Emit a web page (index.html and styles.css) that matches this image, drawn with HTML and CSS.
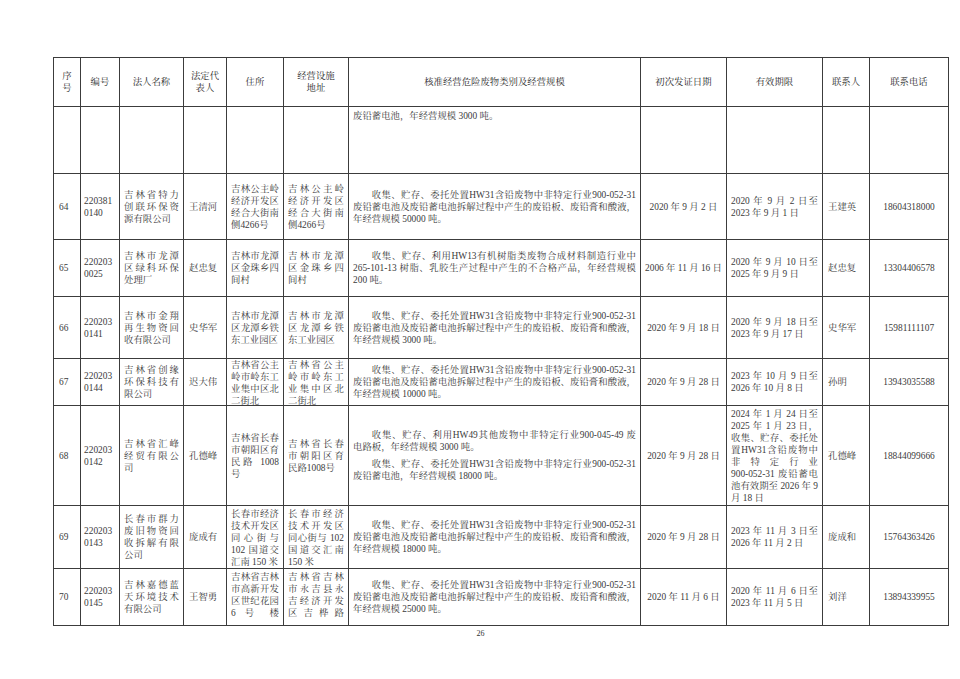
FILE: index.html
```html
<!DOCTYPE html>
<html lang="zh-CN">
<head>
<meta charset="utf-8">
<title>危险废物经营许可证名录</title>
<link rel="stylesheet" href="styles.css">
</head>
<body>
<div class="page">
  <table class="tbl">
    <colgroup>
      <col class="w-no"><col class="w-code"><col class="w-name"><col class="w-rep"><col class="w-addr"><col class="w-fac"><col class="w-scope"><col class="w-date"><col class="w-valid"><col class="w-person"><col class="w-phone">
    </colgroup>
    <thead>
      <tr class="r-head">
        <th>序<br>号</th>
        <th class="soft">编号</th>
        <th class="soft">法人名称</th>
        <th>法定代<br>表人</th>
        <th>住所</th>
        <th>经营设施<br>地址</th>
        <th>核准经营危险废物类别及经营规模</th>
        <th class="soft">初次发证日期</th>
        <th>有效期限</th>
        <th>联系人</th>
        <th>联系电话</th>
      </tr>
    </thead>
    <tbody>
      <tr class="r-cont">
        <td></td><td class="soft"></td><td class="soft"></td><td></td><td></td><td></td>
        <td class="scope top"><span class="ln">废铅蓄电池，年经营规模 3000 吨。</span></td>
        <td class="soft"></td><td></td><td></td><td></td>
      </tr>
      <tr class="r64">
        <td class="no">64</td>
        <td class="code soft">220381<br>0140</td>
        <td class="jt soft">吉林省特力创联环保资源有限公司</td>
        <td class="rep">王清河</td>
        <td class="jt">吉林公主岭经济开发区经合大街南侧4266号</td>
        <td class="jt">吉林公主岭经济开发区经合大街南侧4266号</td>
        <td class="scope"><span class="ln j ind">收集、贮存、委托处置HW31含铅废物中非特定行业900-052-31</span><span class="ln j">废铅蓄电池及废铅蓄电池拆解过程中产生的废铅板、废铅膏和酸液，</span><span class="ln">年经营规模 50000 吨。</span></td>
        <td class="date soft">2020 年 9 月 2 日</td>
        <td class="valid"><span class="ln j">2020 年 9 月 2 日至</span><span class="ln">2023 年 9 月 1 日</span></td>
        <td class="person">王建英</td>
        <td class="phone">18604318000</td>
      </tr>
      <tr class="r65">
        <td class="no">65</td>
        <td class="code soft">220203<br>0025</td>
        <td class="jt soft">吉林市龙潭区绿科环保处理厂</td>
        <td class="rep">赵忠复</td>
        <td class="jt">吉林市龙潭区金珠乡四间村</td>
        <td class="jt">吉林市龙潭区金珠乡四间村</td>
        <td class="scope"><span class="ln j ind">收集、贮存、利用HW13有机树脂类废物合成材料制造行业中</span><span class="ln j">265-101-13 树脂、乳胶生产过程中产生的不合格产品，年经营规模</span><span class="ln">200 吨。</span></td>
        <td class="date soft">2006 年 11 月 16 日</td>
        <td class="valid"><span class="ln j">2020 年 9 月 10 日至</span><span class="ln">2025 年 9 月 9 日</span></td>
        <td class="person">赵忠复</td>
        <td class="phone">13304406578</td>
      </tr>
      <tr class="r66">
        <td class="no">66</td>
        <td class="code soft">220203<br>0141</td>
        <td class="jt soft">吉林市金翔再生物资回收有限公司</td>
        <td class="rep">史华军</td>
        <td class="jt">吉林市龙潭区龙潭乡铁东工业园区</td>
        <td class="jt">吉林市龙潭区龙潭乡铁东工业园区</td>
        <td class="scope"><span class="ln j ind">收集、贮存、委托处置HW31含铅废物中非特定行业900-052-31</span><span class="ln j">废铅蓄电池及废铅蓄电池拆解过程中产生的废铅板、废铅膏和酸液，</span><span class="ln">年经营规模 3000 吨。</span></td>
        <td class="date soft">2020 年 9 月 18 日</td>
        <td class="valid"><span class="ln j">2020 年 9 月 18 日至</span><span class="ln">2023 年 9 月 17 日</span></td>
        <td class="person">史华军</td>
        <td class="phone">15981111107</td>
      </tr>
      <tr class="r67">
        <td class="no">67</td>
        <td class="code soft">220203<br>0144</td>
        <td class="jt soft">吉林省创缘环保科技有限公司</td>
        <td class="rep">迟大伟</td>
        <td class="jt"><div class="clip c67">吉林省公主岭市岭东工业集中区北二街北</div></td>
        <td class="jt"><div class="clip c67">吉林省公主岭市岭东工业集中区北二街北</div></td>
        <td class="scope"><span class="ln j ind">收集、贮存、委托处置HW31含铅废物中非特定行业900-052-31</span><span class="ln j">废铅蓄电池及废铅蓄电池拆解过程中产生的废铅板、废铅膏和酸液，</span><span class="ln">年经营规模 10000 吨。</span></td>
        <td class="date soft">2020 年 9 月 28 日</td>
        <td class="valid"><span class="ln j">2023 年 10 月 9 日至</span><span class="ln">2026 年 10 月 8 日</span></td>
        <td class="person">孙明</td>
        <td class="phone">13943035588</td>
      </tr>
      <tr class="r68">
        <td class="no">68</td>
        <td class="code soft">220203<br>0142</td>
        <td class="jt soft">吉林省汇峰经贸有限公司</td>
        <td class="rep">孔德峰</td>
        <td class="jt">吉林省长春市朝阳区育民路 1008 号</td>
        <td class="jt">吉林省长春市朝阳区育民路1008号</td>
        <td class="scope"><span class="ln j ind">收集、贮存、利用HW49其他废物中非特定行业900-045-49 废</span><span class="ln">电路板，年经营规模 3000 吨。</span><span class="ln j ind para">收集、贮存、委托处置HW31含铅废物中非特定行业900-052-31</span><span class="ln">废铅蓄电池，年经营规模 18000 吨。</span></td>
        <td class="date soft">2020 年 9 月 28 日</td>
        <td class="valid"><span class="ln j">2024 年 1 月 24 日至</span><span class="ln j">2025 年 1 月 23 日，</span><span class="ln j">收集、贮存、委托处</span><span class="ln j">置HW31含铅废物中</span><span class="ln j">非特定行业</span><span class="ln j">900-052-31 废铅蓄电</span><span class="ln j">池有效期至 2026 年 9</span><span class="ln">月 18 日</span></td>
        <td class="person">孔德峰</td>
        <td class="phone">18844099666</td>
      </tr>
      <tr class="r69">
        <td class="no">69</td>
        <td class="code soft">220203<br>0143</td>
        <td class="jt soft">长春市群力废旧物资回收拆解有限公司</td>
        <td class="rep">庞成有</td>
        <td class="jt top">长春市经济技术开发区同心街与 102 国道交汇南 150 米</td>
        <td class="jt top">长春市经济技术开发区同心街与 102 国道交汇南 150 米</td>
        <td class="scope"><span class="ln j ind">收集、贮存、委托处置HW31含铅废物中非特定行业900-052-31</span><span class="ln j">废铅蓄电池及废铅蓄电池拆解过程中产生的废铅板、废铅膏和酸液，</span><span class="ln">年经营规模 18000 吨。</span></td>
        <td class="date soft">2020 年 9 月 28 日</td>
        <td class="valid"><span class="ln j">2023 年 11 月 3 日至</span><span class="ln">2026 年 11 月 2 日</span></td>
        <td class="person">庞成和</td>
        <td class="phone">15764363426</td>
      </tr>
      <tr class="r70">
        <td class="no">70</td>
        <td class="code soft">220203<br>0145</td>
        <td class="jt soft">吉林嘉德蓝天环境技术有限公司</td>
        <td class="rep">王智勇</td>
        <td class="jt top"><div class="clip c70 jl">吉林省吉林市高新开发区世纪花园 6 号 楼</div></td>
        <td class="jt top"><div class="clip c70 jl">吉林省吉林市永吉县永吉经济开发区吉桦路</div></td>
        <td class="scope"><span class="ln j ind">收集、贮存、委托处置HW31含铅废物中非特定行业900-052-31</span><span class="ln j">废铅蓄电池及废铅蓄电池拆解过程中产生的废铅板、废铅膏和酸液，</span><span class="ln">年经营规模 25000 吨。</span></td>
        <td class="date soft">2020 年 11 月 6 日</td>
        <td class="valid"><span class="ln j">2020 年 11 月 6 日至</span><span class="ln">2023 年 11 月 5 日</span></td>
        <td class="person">刘洋</td>
        <td class="phone">13894339955</td>
      </tr>
    </tbody>
  </table>
  <div class="pageno">26</div>
</div>
</body>
</html>
```
FILE: styles.css
```css
* { box-sizing: border-box; }
html, body { margin: 0; padding: 0; background: #fff; }
body {
  font-family: "Liberation Serif", "Noto Serif CJK SC", "Noto Sans CJK SC", serif;
  color: #3a3a3a;
}
.page {
  width: 960px;
  height: 679px;
  padding: 57px 0 0 53px;
  overflow: hidden;
}
.tbl {
  border-collapse: collapse;
  table-layout: fixed;
  width: 895px;
  font-size: 9.4px;
  line-height: 12px;
}
.tbl th, .tbl td {
  border: 1px solid #3c3c3c;
  padding: 0 4px;
  vertical-align: middle;
  overflow: hidden;
}
.tbl th.soft, .tbl td.soft { border-left-color: #8c8c8c; }
.tbl th {
  font-weight: normal;
  color: #2a2a2a;
  text-align: center;
}
.w-no { width: 27px; }
.w-code { width: 39px; }
.w-name { width: 64px; }
.w-rep { width: 43px; }
.w-addr { width: 57px; }
.w-fac { width: 65px; }
.w-scope { width: 292px; }
.w-date { width: 86px; }
.w-valid { width: 96px; }
.w-person { width: 47px; }
.w-phone { width: 79px; }

.r-head { height: 49px; }
.r-cont { height: 67px; }
.r64 { height: 66px; }
.r65 { height: 57px; }
.r66 { height: 62px; }
.r67 { height: 46px; }
.r68 { height: 100px; }
.r69 { height: 60px; }
.r70 { height: 57px; }

.tbl td.top { vertical-align: top; padding-top: 2px; }
.tbl td.no { padding-left: 5px; }
.tbl td.code { padding-left: 3px; }
.tbl td.rep { padding-left: 5px; }
.tbl td.jt { text-align: justify; }
.tbl td.date { text-align: center; padding: 0 2px; }
.tbl td.person { padding-left: 5px; }
.tbl td.phone { text-align: center; }
.tbl td.scope { padding: 0 4px; }
.tbl td.scope.top { padding-top: 3px; }

.ln { display: block; white-space: nowrap; }
.ln.j { text-align: justify; text-align-last: justify; }
.ln.ind { text-indent: 2em; }
.ln.para { margin-top: 5px; }

.clip { overflow: hidden; }
.c67 { max-height: 46px; }
.c70 { max-height: 54px; }
.jl { text-align: justify; text-align-last: justify; }

.pageno {
  width: 855px;
  text-align: center;
  font-size: 8px;
  line-height: 10px;
  margin-top: 3px;
  color: #333;
}
```
